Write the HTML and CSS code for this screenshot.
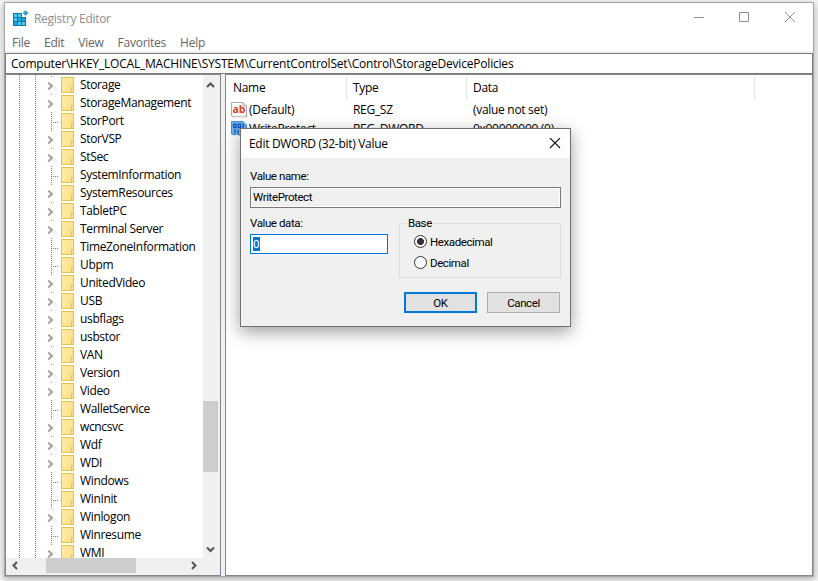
FILE: index.html
```html
<!DOCTYPE html>
<html lang="en">

<head>
    <meta charset="UTF-8">
    <meta name="viewport" content="width=device-width, initial-scale=1.0">
    <title>Registry Editor</title>
    <link rel="stylesheet" href="styles.css">
</head>

<body>
    <div class="window">
        <header class="titlebar">
            <svg class="app-icon" width="16" height="16" viewBox="0 0 16 16">
                <path d="M0 3h9v4h4v9H0z" fill="#0878ae" />
                <path d="M1 4h3v3H1zM5 4h3v3H5zM1 8h3v3H1zM5 12h3v3H5zM9 12h3v3H9z" fill="#4fc8f4" />
                <path d="M5 8h3v3H5zM9 8h3v3H9zM1 12h3v3H1z" fill="#16a5dc" />
                <path d="M12.500 .8l2.200 2.200-2.200 2.200-2.200-2.200z" fill="#36b5e8" stroke="#1681b4" />
            </svg>
            <h1>Registry Editor</h1>
            <svg class="controls" width="102" height="12" viewBox="0 0 102 12">
                <path d="M1 5.500h10M46.500 .5h9v9h-9zM92 0l10 10M102 0L92 10" fill="none" stroke="#8f8f8f" />
            </svg>
        </header>
        <nav class="menu">
            <span>File</span>
            <span>Edit</span>
            <span>View</span>
            <span>Favorites</span>
            <span>Help</span>
        </nav>
        <div class="address">Computer\HKEY_LOCAL_MACHINE\SYSTEM\CurrentControlSet\Control\StorageDevicePolicies</div>

        <main class="panes">
            <section class="tree-pane">
                <div class="tree-area">
                    <ul class="tree">
                        <li>Storage</li>
                        <li>StorageManagement</li>
                        <li class="leaf">StorPort</li>
                        <li>StorVSP</li>
                        <li>StSec</li>
                        <li class="leaf">SystemInformation</li>
                        <li>SystemResources</li>
                        <li>TabletPC</li>
                        <li>Terminal Server</li>
                        <li class="leaf">TimeZoneInformation</li>
                        <li class="leaf">Ubpm</li>
                        <li>UnitedVideo</li>
                        <li>USB</li>
                        <li>usbflags</li>
                        <li>usbstor</li>
                        <li>VAN</li>
                        <li>Version</li>
                        <li>Video</li>
                        <li class="leaf">WalletService</li>
                        <li>wcncsvc</li>
                        <li>Wdf</li>
                        <li>WDI</li>
                        <li class="leaf">Windows</li>
                        <li class="leaf">WinInit</li>
                        <li>Winlogon</li>
                        <li class="leaf">Winresume</li>
                        <li>WMI</li>
                    </ul>
                    <div class="scroll-y">
                        <svg width="15" height="15" viewBox="0 0 15 15"><path d="M4 9l3.500-3.500 3.500 3.500" /></svg>
                        <div class="thumb-y"></div>
                        <svg width="15" height="15" viewBox="0 0 15 15"><path d="M4 5.500l3.500 3.500 3.500-3.500" /></svg>
                    </div>
                </div>
                <div class="scroll-x">
                    <svg width="15" height="15" viewBox="0 0 15 15"><path d="M9 4L5.500 7.500 9 11" /></svg>
                    <div class="thumb-x"></div>
                    <svg width="15" height="15" viewBox="0 0 15 15"><path d="M6 4L9.500 7.500 6 11" /></svg>
                </div>
            </section>

            <section class="list-pane">
                <div class="columns">
                    <span>Name</span>
                    <span>Type</span>
                    <span>Data</span>
                </div>
                <div class="value">
                    <div class="value-name">
                        <svg width="16" height="16" viewBox="0 0 16 16">
                            <path d="M.5.500h11.500l3.500 3.500v11l-2-1-2 1.500-2-1.500-2 1-2-1-2 1-3-1z" fill="#fff" stroke="#a9a9a9" />
                            <path d="M12 .5V4h3.500" fill="none" stroke="#a9a9a9" />
                            <text x="1.500" y="10.500" class="icon-ab">ab</text>
                        </svg>
                        (Default)
                    </div>
                    <span>REG_SZ</span>
                    <span>(value not set)</span>
                </div>
                <div class="value">
                    <div class="value-name">
                        <svg width="16" height="16" viewBox="0 0 16 16">
                            <path d="M.5.500h11.500l3.500 3.500v10l-2 1-2 .5-2-1.500-2 0-2-1-2 1-3-1z" fill="#74b4e8" stroke="#3f8fce" />
                            <path d="M2.700 3.200h2.300v3.300H2.700zM7.200 3.200h2.300v3.300H7.200zM12 2.500v4.700M4 8.500v4M7 8.500v4M10 8.500v4" fill="none" stroke="#0b55c4" stroke-width="1.300" />
                        </svg>
                        WriteProtect
                    </div>
                    <span>REG_DWORD</span>
                    <span>0x00000000 (0)</span>
                </div>
            </section>
        </main>
    </div>

    <form class="dialog">
        <div class="dialog-title">
            <h2>Edit DWORD (32-bit) Value</h2>
            <svg width="12" height="12" viewBox="0 0 12 12"><path d="M1 0l10 10M11 0L1 10" stroke="#111" stroke-width="1.100" /></svg>
        </div>
        <div class="dialog-body">
            <label>Value name:</label>
            <div class="field readonly">WriteProtect</div>
            <div class="data-row">
                <div class="data-col">
                    <label>Value data:</label>
                    <div class="field active"><mark>0</mark></div>
                </div>
                <fieldset>
                    <legend>Base</legend>
                    <div class="option"><i class="radio checked"></i>Hexadecimal</div>
                    <div class="option"><i class="radio"></i>Decimal</div>
                </fieldset>
            </div>
            <div class="buttons">
                <button type="button" class="default">OK</button>
                <button type="button">Cancel</button>
            </div>
        </div>
    </form>
</body>

</html>
```
FILE: styles.css
```css
*,
*::before,
*::after {
    margin: 0;
    padding: 0;
    box-sizing: border-box;
}

body {
    width: 818px;
    height: 581px;
    padding: 2px 4px;
    overflow: hidden;
    background-color: #f4f4f4;
    font-family: "Open Sans", "Noto Sans", sans-serif;
    font-size: 12px;
    letter-spacing: -0.3px;
    color: #000;
}

.window {
    display: flex;
    flex-direction: column;
    width: 810px;
    height: 575px;
    border: 1px solid #a5a5a5;
    background-color: #fff;
    box-shadow: 0 2px 7px rgba(0, 0, 0, 0.3);
}

.titlebar {
    display: flex;
    align-items: center;
    height: 30px;
    padding: 0 18px 0 8px;
    color: #8f8f8f;
}

.titlebar h1 {
    flex: 1;
    margin-left: 5px;
    font-size: 12px;
    font-weight: normal;
}

.menu {
    display: flex;
    gap: 14px;
    height: 20px;
    padding-left: 7px;
    line-height: 20px;
    letter-spacing: -0.25px;
    border-bottom: 2px solid #f0f0f0;
    color: #666;
}

.address {
    height: 21px;
    padding-left: 5px;
    border: 1px solid #7a7a7a;
    line-height: 19px;
    letter-spacing: -0.2px;
    white-space: nowrap;
}

.panes {
    display: flex;
    gap: 4px;
    flex: 1;
    min-height: 0;
    background-color: #f0f0f0;
}

.tree-pane {
    display: flex;
    flex-direction: column;
    width: 216px;
    border: 1px solid #828790;
    background-color: #f0f0f0;
}

.tree-area {
    display: flex;
    height: 483px;
    overflow: hidden;
}

.tree {
    width: 197px;
    padding-top: 1px;
    list-style: none;
    letter-spacing: -0.35px;
    background-color: #fff;
    /* dotted guide lines of the two outer levels */
    background-image: repeating-linear-gradient(#777 0 1px, #fff 1px 2px), repeating-linear-gradient(#777 0 1px, #fff 1px 2px);
    background-size: 1px 100%;
    background-position: 13px 0, 29px 0;
    background-repeat: no-repeat;
}

.tree li {
    position: relative;
    height: 18px;
    padding-left: 74px;
    line-height: 18px;
    white-space: nowrap;
    background: linear-gradient(#888, #888) 45px 0 / 1px 1px no-repeat;
}

/* expand arrow */
.tree li::before {
    content: "";
    position: absolute;
    left: 40px;
    top: 7px;
    width: 6px;
    height: 6px;
    border: solid #a3a3a3;
    border-width: 2px 2px 0 0;
    transform: rotate(45deg);
}

/* folder */
.tree li::after {
    content: "";
    position: absolute;
    left: 55px;
    top: 1px;
    width: 13px;
    height: 16px;
    border: 1px solid #e8c24a;
    background:
        linear-gradient(#e8c24a, #e8c24a) 9px 9px / 1px 5px no-repeat,
        linear-gradient(#e8c24a, #e8c24a) 9px 9px / 2px 1px no-repeat,
        linear-gradient(110deg, #ffebaa, #fedf83);
}

.tree .leaf {
    background:
        repeating-linear-gradient(#777 0 1px, #fff 1px 2px) 45px 0 / 1px 18px no-repeat,
        repeating-linear-gradient(90deg, #777 0 1px, #fff 1px 2px) 47px 10px / 6px 1px no-repeat;
}

.tree .leaf::before {
    display: none;
}

.scroll-y {
    display: flex;
    flex-direction: column;
    width: 15px;
    padding-top: 3px;
    background-color: #f0f0f0;
}

.scroll-y svg,
.scroll-x svg {
    flex: none;
    fill: none;
    stroke: #555;
    stroke-width: 2;
}

.thumb-y {
    height: 71px;
    margin: 308px 0 70px;
    background-color: #cdcdcd;
}

.scroll-x {
    display: flex;
    height: 15px;
    padding-left: 2px;
}

.thumb-x {
    width: 90px;
    margin: 0 50px 0 23px;
    background-color: #cdcdcd;
}

.list-pane {
    flex: 1;
    border: 1px solid #828790;
    background-color: #fff;
}

.columns {
    display: flex;
    height: 25px;
    padding-top: 1px;
    line-height: 24px;
}

.columns span {
    width: 120px;
    padding-left: 6px;
    border-right: 1px solid #e5e5e5;
}

.columns span:first-child {
    width: 121px;
    padding-left: 7px;
}

.columns span:last-child {
    width: 288px;
}

.value {
    display: flex;
    height: 19px;
    line-height: 19px;
}

.value span {
    width: 120px;
}

.value-name {
    display: flex;
    align-items: center;
    gap: 2px;
    width: 127px;
    padding-left: 5px;
}

.icon-ab {
    font: bold 10.5px "Open Sans", sans-serif;
    letter-spacing: 0;
    fill: #d9401a;
}

/* the dialog floats above the main window */
.dialog {
    position: absolute;
    left: 240px;
    top: 128px;
    width: 331px;
    height: 199px;
    border: 1px solid #707070;
    background-color: #f0f0f0;
    box-shadow: 0 5px 16px rgba(0, 0, 0, 0.38);
}

.dialog-title {
    display: flex;
    align-items: center;
    justify-content: space-between;
    height: 29px;
    padding: 0 9px 0 8px;
    background-color: #fff;
}

.dialog-title h2 {
    font-size: 12px;
    font-weight: normal;
}

.dialog-body {
    padding: 10px 9px 0;
    font-family: Roboto, "Liberation Sans", sans-serif;
    font-size: 11.5px;
    letter-spacing: -0.4px;
}

.dialog-body label {
    display: block;
    height: 19px;
    line-height: 17px;
}

.field {
    height: 20px;
    padding-left: 2px;
    line-height: 18px;
    border: 1px solid #7a7a7a;
}

.readonly {
    height: 21px;
    box-shadow: inset 0 0 0 1px #fff;
}

.active {
    border-color: #0078d7;
    background-color: #fff;
    padding: 2px;
    line-height: 14px;
}

.active mark {
    display: inline-block;
    width: 7px;
    height: 14px;
    color: #fff;
    background-color: #0078d7;
}

.data-row {
    display: flex;
    justify-content: space-between;
    height: 70px;
    padding-top: 7px;
}

.data-col {
    width: 138px;
}

fieldset {
    width: 162px;
    height: 63px;
    padding: 0 0 0 14px;
    border: 1px solid #dcdcdc;
}

legend {
    height: 16px;
    margin-left: -8px;
    padding: 0 2px;
    line-height: 16px;
}

.option {
    display: flex;
    align-items: center;
    gap: 3px;
    height: 21px;
}

.radio {
    width: 13px;
    height: 13px;
    border: 1px solid #333;
    border-radius: 50%;
    background-color: #fff;
}

.checked {
    background: radial-gradient(circle, #333 3.200px, #fff 3.800px);
}

.buttons {
    display: flex;
    justify-content: flex-end;
    gap: 10px;
    padding: 14px 1px 0 0;
}

button {
    width: 73px;
    height: 21px;
    border: 1px solid #adadad;
    background-color: #e1e1e1;
    font: inherit;
    letter-spacing: inherit;
    color: #000;
}

button.default {
    border: 2px solid #0078d7;
}
```
